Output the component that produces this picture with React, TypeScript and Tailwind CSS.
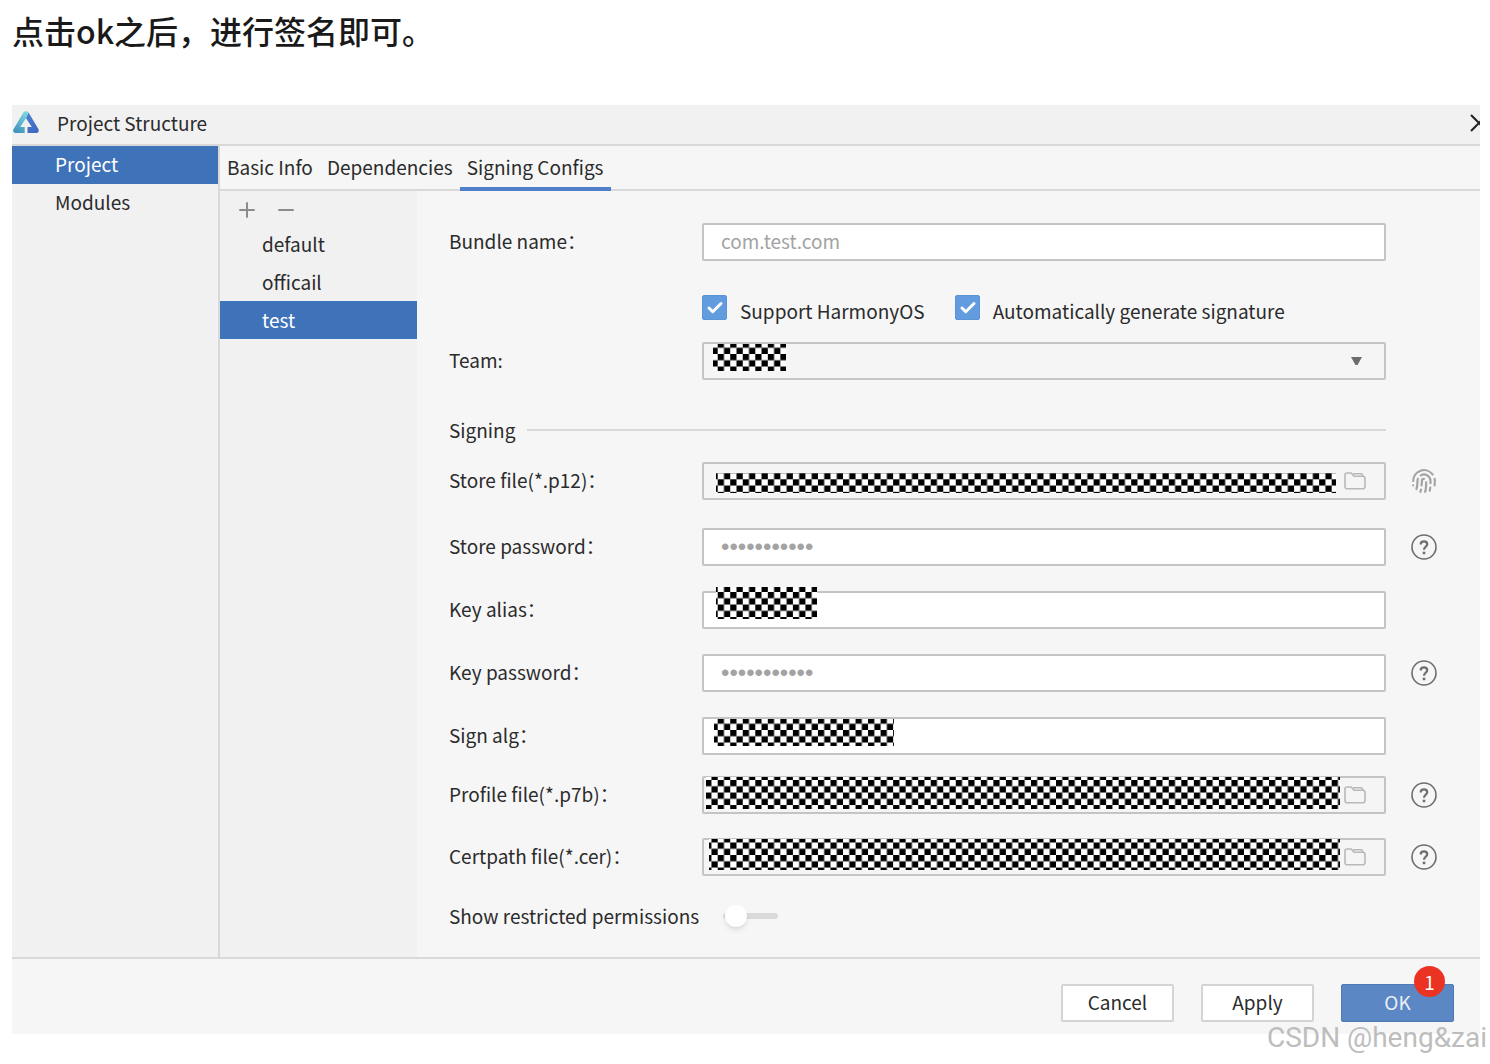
import { useId, useState } from 'react';
import type { ReactNode } from 'react';
import { clsx } from 'clsx';
import { Check, Fingerprint, Minus, Plus } from 'lucide-react';

const CELL = 6.265;

// Checkered block that hides a private value. x / y shift the pattern inside the block.
function Mask({ className, x, y }: { className: string; x: number; y: number }) {
  const id = useId();

  return (
    <div className={clsx('absolute pointer-events-none', className)}>
      <svg className="block w-full h-full" aria-hidden="true">
        <defs>
          <pattern id={id} x={x} y={y} width={CELL * 2} height={CELL * 2} patternUnits="userSpaceOnUse">
            <rect width={CELL * 2} height={CELL * 2} fill="#fff" />
            <rect width={CELL} height={CELL} fill="#000" />
            <rect x={CELL} y={CELL} width={CELL} height={CELL} fill="#000" />
          </pattern>
        </defs>
        <rect width="100%" height="100%" fill={`url(#${id})`} />
      </svg>
    </div>
  );
}

function Logo() {
  return (
    <svg width="26" height="23" viewBox="0 0 26 23" aria-hidden="true">
      <defs>
        <linearGradient id="logo-left" x1="0.7" y1="0" x2="0.3" y2="1">
          <stop offset="0" stopColor="#7fd6dc" />
          <stop offset="1" stopColor="#3f93bd" />
        </linearGradient>
        <linearGradient id="logo-right" x1="0.2" y1="0" x2="0.8" y2="1">
          <stop offset="0" stopColor="#4a7fd0" />
          <stop offset="1" stopColor="#3f68c0" />
        </linearGradient>
      </defs>
      <path d="M10.500 1.200Q11.300 .2 13 .2Q14.800 .2 15.600 1.400L13 7.200L7.200 16H11.700V22H2.200Q-.6 21.500 .4 18.400Z" fill="url(#logo-left)" />
      <path d="M15.600 1.400L25.500 18.200Q26.500 21.400 23.800 22H14.500V16H18.800L13 7.200Z" fill="url(#logo-right)" />
    </svg>
  );
}

function FolderIcon() {
  return (
    <svg width="22" height="18" viewBox="0 0 22 18" fill="none" stroke="#b9b9b9" strokeWidth="1.600" aria-hidden="true">
      <path d="M1 14.500V3Q1 1 3 1H7.200L10 4.200H18.500Q21 4.200 21 6.500V14.500Q21 16.800 18.800 16.800H3.200Q1 16.800 1 14.500Z" />
      <path d="M9 1.800H16.500Q18.600 1.800 19 4.200" />
    </svg>
  );
}

function HelpIcon() {
  return (
    <svg width="26" height="26" viewBox="0 0 26 26" fill="none" stroke="#6e6e6e" aria-hidden="true">
      <circle cx="13" cy="13" r="12" strokeWidth="1.600" />
      <path d="M9.700 10.500Q9.700 7.400 13 7.400Q16.200 7.400 16.200 10.200Q16.200 11.600 14.600 12.800Q13 14 13 15.800" strokeWidth="2.200" />
      <path d="M13 17.700V20.200" strokeWidth="2.600" />
    </svg>
  );
}

type RowProps = {
  id: string;
  label: string;
  aside?: ReactNode;
  children: ReactNode;
};

function Row({ id, label, aside, children }: RowProps) {
  return (
    <div className="flex items-center">
      <label htmlFor={id} className="w-[253px] shrink-0 pb-0.5">
        {label}
      </label>
      <div className="relative flex-1 h-[38px]">{children}</div>
      <div className="w-[94px] shrink-0 pl-[25px] flex">{aside}</div>
    </div>
  );
}

function Field({ id, type = 'text', value, readOnly }: { id: string; type?: string; value?: string; readOnly?: boolean }) {
  return (
    <input
      id={id}
      type={type}
      defaultValue={value}
      readOnly={readOnly}
      className={clsx(
        'block w-full h-full rounded-xs border-2 border-[#c4c4c4] px-[17px] text-[#a3a3a3] outline-none',
        type === 'password' ? "font-['Liberation_Sans',sans-serif] text-[24px]" : 'pb-1',
        readOnly ? 'bg-[#f5f5f5]' : 'bg-white'
      )}
    />
  );
}

function BrowseButton() {
  return (
    <button aria-label="Browse" className="absolute right-5 top-2.5">
      <FolderIcon />
    </button>
  );
}

function HelpButton() {
  return (
    <button aria-label="Help">
      <HelpIcon />
    </button>
  );
}

function CheckBox({ id, label }: { id: string; label: string }) {
  return (
    <div className="flex items-center">
      <span className="relative h-[25px] w-[25px]">
        <input
          id={id}
          type="checkbox"
          defaultChecked
          className="peer block h-full w-full appearance-none rounded-xs border border-[#5a94d6] bg-white checked:bg-[#629bde]"
        />
        <Check
          className="absolute left-1 top-1 hidden h-[18px] w-[18px] text-white pointer-events-none peer-checked:block"
          strokeWidth={4}
        />
      </span>
      <label htmlFor={id} className="pl-[13px] pt-2">
        {label}
      </label>
    </div>
  );
}

const configs = ['default', 'officail', 'test'];
const tabs = ['Basic Info', 'Dependencies', 'Signing Configs'];

export default function App() {
  const [section, setSection] = useState('Project');
  const [tab, setTab] = useState('Signing Configs');
  const [config, setConfig] = useState('test');

  return (
    <div className="relative min-h-screen bg-white pl-3 pr-2.5 pb-[30px] font-['Noto_Sans_CJK_SC',sans-serif] text-[19px] leading-7 text-[#2b2b2b]">
      <p className="pt-1.5 pb-[51px] text-[32px] leading-[48px] font-medium text-[#1a1a1a]">点击ok之后，进行签名即可。</p>

      <div className="bg-[#f6f6f6]">
        <header className="flex h-[39px] items-center justify-between overflow-hidden bg-[#f1f1f1] pl-px pb-1">
          <div className="flex items-center gap-[18px]">
            <Logo />
            <h1>Project Structure</h1>
          </div>
          <button aria-label="Close" className="w-[10px] overflow-hidden">
            <svg className="max-w-none" width="19" height="18" viewBox="0 0 19 18" fill="none" stroke="#222" strokeWidth="2" aria-hidden="true">
              <path d="M1 1L17 17M17 1L1 17" />
            </svg>
          </button>
        </header>

        <div className="flex border-y-2 border-[#d9d9d9]">
          <nav className="w-[208px] shrink-0 border-r-2 border-[#d9d9d9] bg-[#f1f1f1]">
            {['Project', 'Modules'].map((name) => (
              <button
                key={name}
                onClick={() => setSection(name)}
                className={clsx(
                  'block h-[38px] w-full pl-[43px] pb-0.5 text-left',
                  section === name && 'bg-[#3f73b9] text-white'
                )}
              >
                {name}
              </button>
            ))}
          </nav>

          <div className="min-w-0 flex-1">
            <div className="flex h-[45px] border-b-2 border-[#d9d9d9]">
              {tabs.map((name) => (
                <button
                  key={name}
                  onClick={() => setTab(name)}
                  className={clsx(
                    'h-[45px] border-b-4 px-[7px] pt-px whitespace-nowrap',
                    tab === name ? 'border-[#4f80c8]' : 'border-transparent'
                  )}
                >
                  {name}
                </button>
              ))}
            </div>

            <div className="flex">
              <aside className="w-[197px] shrink-0 bg-[#f1f1f1]">
                <div className="flex h-[34px] items-center gap-[15px] pl-[15px] pt-1 text-[#8c8c8c]">
                  <button aria-label="Add">
                    <Plus className="h-6 w-6" strokeWidth={2} />
                  </button>
                  <button aria-label="Remove">
                    <Minus className="h-6 w-6" strokeWidth={2} />
                  </button>
                </div>
                {configs.map((name) => (
                  <button
                    key={name}
                    onClick={() => setConfig(name)}
                    className={clsx(
                      'block h-[38px] w-full pl-[42px] pb-px text-left',
                      config === name && 'bg-[#3f73b9] text-white'
                    )}
                  >
                    {name}
                  </button>
                ))}
              </aside>

              <form className="min-w-0 flex-1 pl-8 pt-8 pb-[27px]" onSubmit={(e) => e.preventDefault()}>
                <Row id="bundle" label="Bundle name：">
                  <Field id="bundle" value="com.test.com" />
                </Row>

                <div className="flex gap-[30px] pt-7 pb-[17px] pl-[253px]">
                  <CheckBox id="harmony" label="Support HarmonyOS" />
                  <CheckBox id="auto" label="Automatically generate signature" />
                </div>

                <Row id="team" label="Team:">
                  <select id="team" className="block h-full w-full appearance-none rounded-xs border-2 border-[#c4c4c4] bg-[#f5f5f5]" />
                  <svg className="absolute right-6 top-[15px] pointer-events-none" width="11" height="8" viewBox="0 0 11 8" aria-hidden="true">
                    <path d="M0 0H11L6.500 8H4.500Z" fill="#6b6b6b" />
                  </svg>
                  <Mask className="left-[11px] top-0.5 h-[27px] w-[73px]" x={4.7} y={10} />
                </Row>

                <div className="flex items-center gap-3 pt-9 pb-[18px] pr-[94px]">
                  <h2>Signing</h2>
                  <hr className="flex-1 border-t-2 border-[#d9d9d9]" />
                </div>

                <Row id="store" label="Store file(*.p12)：" aside={<Fingerprint className="h-[26px] w-[26px] text-[#a3a3a3]" strokeWidth={2} />}>
                  <Field id="store" readOnly />
                  <Mask className="left-[14px] right-[50px] top-[11px] h-5" x={1.7} y={6.3} />
                  <BrowseButton />
                </Row>

                <div className="flex flex-col gap-[25px] pt-7 pb-[21px]">
                  <Row id="store-password" label="Store password：" aside={<HelpButton />}>
                    <Field id="store-password" type="password" value="storepasswd" />
                  </Row>
                  <Row id="alias" label="Key alias：">
                    <Field id="alias" />
                    <Mask className="left-[14px] -top-1 h-8 w-[101px]" x={1.7} y={5} />
                  </Row>
                  <Row id="key-password" label="Key password：" aside={<HelpButton />}>
                    <Field id="key-password" type="password" value="keypassword" />
                  </Row>
                  <Row id="alg" label="Sign alg：">
                    <Field id="alg" />
                    <Mask className="left-3 top-0.5 h-[27px] w-[180px]" x={3.7} y={11} />
                  </Row>
                </div>

                <div className="flex flex-col gap-6">
                  <Row id="profile" label="Profile file(*.p7b)：" aside={<HelpButton />}>
                    <Field id="profile" readOnly />
                    <Mask className="left-1 right-[46px] top-px h-8" x={11.7} y={3} />
                    <BrowseButton />
                  </Row>
                  <Row id="certpath" label="Certpath file(*.cer)：" aside={<HelpButton />}>
                    <Field id="certpath" readOnly />
                    <Mask className="left-[7px] right-[46px] top-px h-[31px]" x={8.7} y={3.5} />
                    <BrowseButton />
                  </Row>
                </div>

                <div className="flex items-center gap-6 pt-[26px]">
                  <label htmlFor="restricted">Show restricted permissions</label>
                  <span className="relative flex h-6 w-[55px] items-center">
                    <input
                      id="restricted"
                      type="checkbox"
                      role="switch"
                      className="peer h-1.5 w-full appearance-none rounded-full bg-[#dadada]"
                    />
                    <span className="absolute left-0.5 h-[22px] w-[22px] rounded-full bg-white shadow-md pointer-events-none peer-checked:left-8" />
                  </span>
                </div>
              </form>
            </div>
          </div>
        </div>

        <footer className="flex justify-end gap-[27px] pt-[25px] pb-3 pr-[26px]">
          <button className="h-[38px] w-[113px] rounded-xs border-2 border-[#d4d4d4] bg-white pb-0.5">Cancel</button>
          <button className="h-[38px] w-[113px] rounded-xs border-2 border-[#d4d4d4] bg-white pb-0.5">Apply</button>
          <button className="relative h-[38px] w-[113px] rounded-xs border border-[#4f78b5] bg-[#5b88c4] pb-0.5 text-[#e8eef7]">
            OK
            <span className="absolute right-2 -top-[19px] flex h-[31px] w-[31px] items-center justify-center rounded-full bg-[#ea3323] text-white">
              1
            </span>
          </button>
        </footer>
      </div>

      <div className="absolute right-[3px] bottom-2 font-[Roboto,sans-serif] text-[28px] leading-9 text-[#bdbdbd] pointer-events-none">
        CSDN @heng&amp;zai
      </div>
    </div>
  );
}
